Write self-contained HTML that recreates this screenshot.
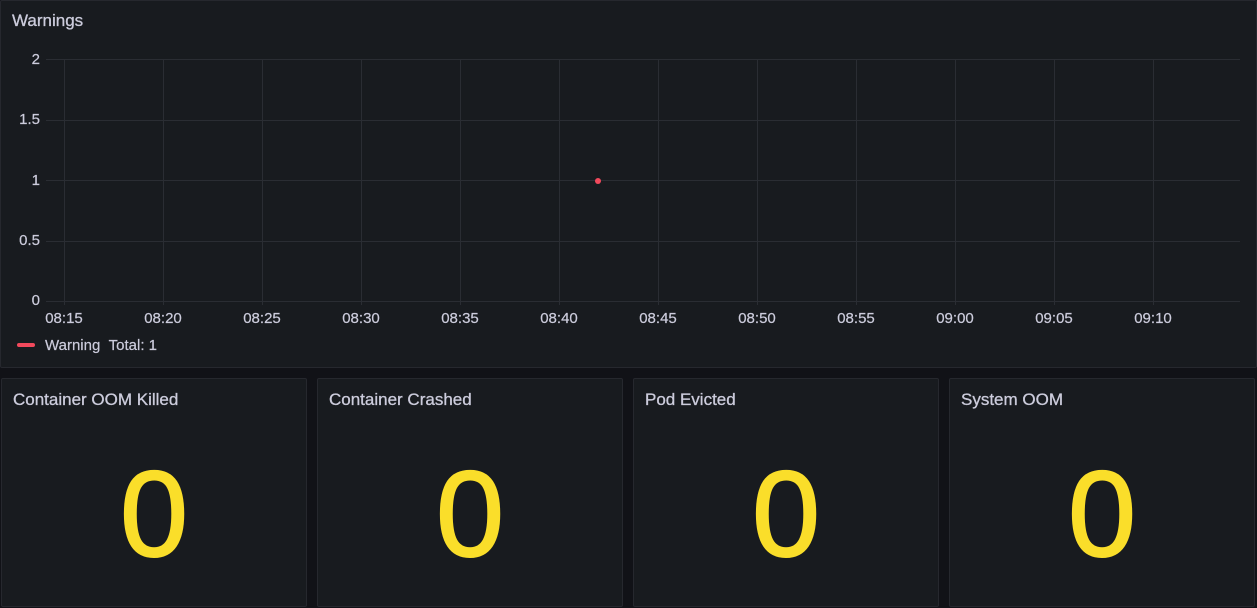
<!DOCTYPE html>
<html><head><style>
body{margin:0;width:1257px;height:608px;background:#111217;font-family:"Liberation Sans",sans-serif;position:relative;overflow:hidden}
.p{position:absolute;background:#181b1f;border:1px solid #26282e;border-radius:2px;box-sizing:border-box}
.t{position:absolute;left:11px;top:11px;color:#ccccdc;font-size:17px;-webkit-text-stroke:0.3px #ccccdc}
.big{position:absolute;left:0;right:0;top:74px;text-align:center;color:#fade2a;font-size:122px;line-height:122px;-webkit-text-stroke:2px #fade2a}
.yl{position:absolute;color:#ccccdc;font-size:15px;width:40px;text-align:right;-webkit-text-stroke:0.2px #ccccdc}
.xl{position:absolute;color:#ccccdc;font-size:15px;width:60px;text-align:center;top:310px;-webkit-text-stroke:0.2px #ccccdc}
</style></head><body>
<div class="p" style="left:0;top:0;width:1257px;height:368px">
<div class="t" style="top:10px">Warnings</div>
</div>
<svg style="position:absolute;left:0;top:0" width="1257" height="368">
<g stroke="#2a2d33" stroke-width="1">
<line x1="46" y1="59.5" x2="1240" y2="59.5"/><line x1="46" y1="120.5" x2="1240" y2="120.5"/><line x1="46" y1="180.5" x2="1240" y2="180.5"/><line x1="46" y1="241.5" x2="1240" y2="241.5"/><line x1="46" y1="301.5" x2="1240" y2="301.5"/>
<line x1="64.5" y1="59" x2="64.5" y2="305"/><line x1="163.5" y1="59" x2="163.5" y2="305"/><line x1="262.5" y1="59" x2="262.5" y2="305"/><line x1="361.5" y1="59" x2="361.5" y2="305"/><line x1="460.5" y1="59" x2="460.5" y2="305"/><line x1="559.5" y1="59" x2="559.5" y2="305"/><line x1="658.5" y1="59" x2="658.5" y2="305"/><line x1="757.5" y1="59" x2="757.5" y2="305"/><line x1="856.5" y1="59" x2="856.5" y2="305"/><line x1="955.5" y1="59" x2="955.5" y2="305"/><line x1="1054.5" y1="59" x2="1054.5" y2="305"/><line x1="1153.5" y1="59" x2="1153.5" y2="305"/>
</g>
<circle cx="598" cy="181" r="3" fill="#f2495c"/>
<rect x="17" y="343" width="18" height="4" rx="2" fill="#f2495c"/>
</svg>
<div class="yl" style="left:0;top:51px">2</div>
<div class="yl" style="left:0;top:111px">1.5</div>
<div class="yl" style="left:0;top:172px">1</div>
<div class="yl" style="left:0;top:232px">0.5</div>
<div class="yl" style="left:0;top:292px">0</div>
<div class="xl" style="left:34px">08:15</div><div class="xl" style="left:133px">08:20</div><div class="xl" style="left:232px">08:25</div><div class="xl" style="left:331px">08:30</div><div class="xl" style="left:430px">08:35</div><div class="xl" style="left:529px">08:40</div><div class="xl" style="left:628px">08:45</div><div class="xl" style="left:727px">08:50</div><div class="xl" style="left:826px">08:55</div><div class="xl" style="left:925px">09:00</div><div class="xl" style="left:1024px">09:05</div><div class="xl" style="left:1123px">09:10</div>
<div style="position:absolute;left:45px;top:337px;color:#ccccdc;font-size:15px;-webkit-text-stroke:0.2px #ccccdc">Warning&nbsp;&nbsp;Total: 1</div>
<div class="p" style="left:1px;top:378px;width:306px;height:229px"><div class="t">Container OOM Killed</div><div class="big">0</div></div>
<div class="p" style="left:317px;top:378px;width:306px;height:229px"><div class="t">Container Crashed</div><div class="big">0</div></div>
<div class="p" style="left:633px;top:378px;width:306px;height:229px"><div class="t">Pod Evicted</div><div class="big">0</div></div>
<div class="p" style="left:949px;top:378px;width:306px;height:229px"><div class="t">System OOM</div><div class="big">0</div></div>
</body></html>
